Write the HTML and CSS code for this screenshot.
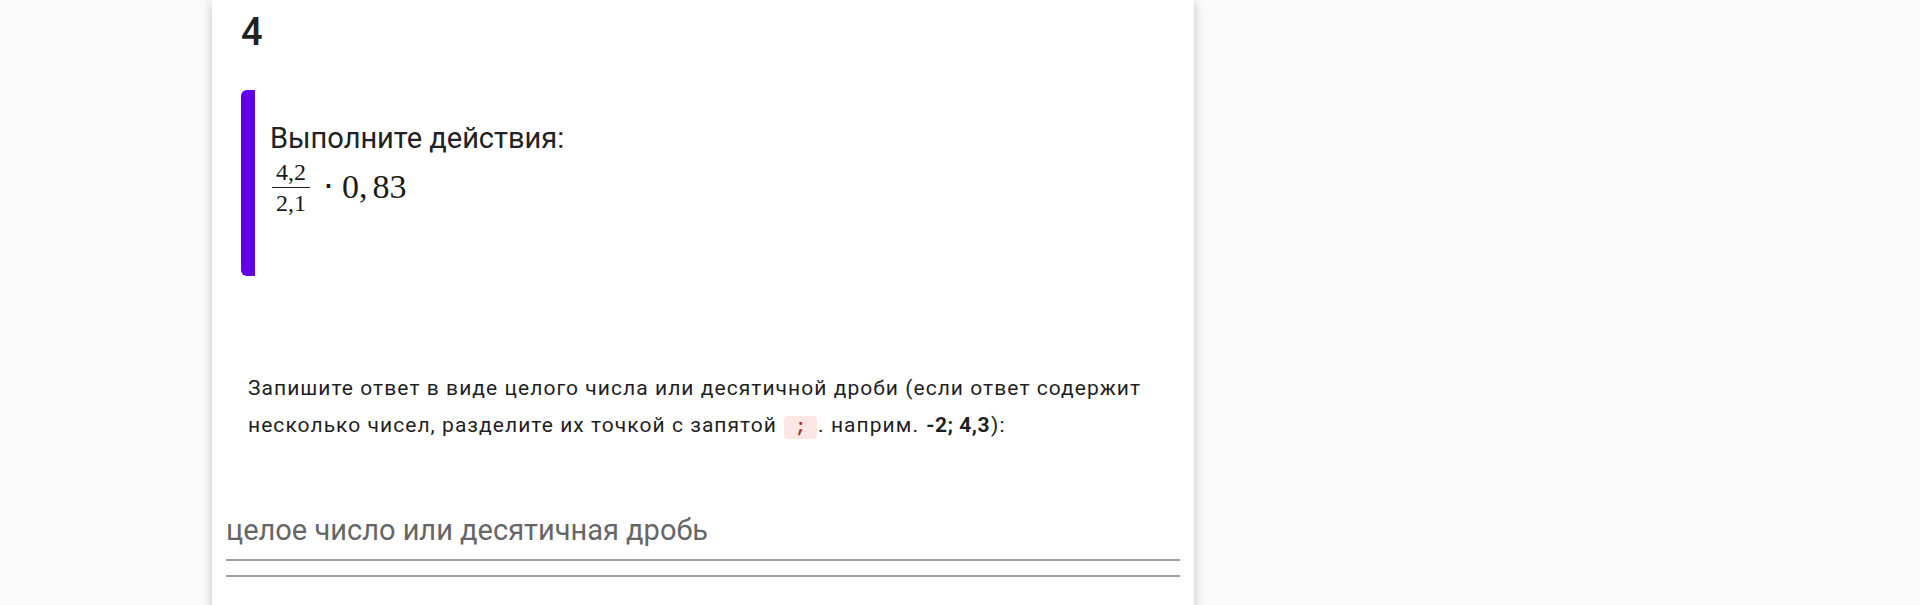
FILE: index.html
```html
<!DOCTYPE html>
<html lang="ru">
<head>
<meta charset="utf-8">
<title>Задание 4</title>
<link rel="stylesheet" href="styles.css">
</head>
<body>
<div class="card">
  <div class="num">4</div>
  <div class="question">
    <div class="qtitle">Выполните действия:</div>
    <div class="math"><span class="frac"><span class="fnum">4,2</span><span class="fden">2,1</span></span><span class="op">⋅</span><span class="mn">0,</span><span class="mn sp">83</span></div>
  </div>
  <p class="hint">Запишите ответ в виде целого числа или десятичной дроби (если ответ содержит несколько чисел, разделите их точкой с запятой <code class="chip">;</code>. наприм. <b>-2; 4,3</b>):</p>
  <div class="field"><input class="answer" type="text" placeholder="целое число или десятичная дробь"></div>
  <div class="line2"></div>
</div>
</body>
</html>
```
FILE: styles.css
```css
html, body {
  margin: 0;
  padding: 0;
  height: 100%;
  overflow: hidden;
  background: #fafafa;
}

.card {
  margin-left: 212px;
  width: 982px;
  height: 700px;
  background: #ffffff;
  box-shadow: 0 2px 10px rgba(0, 0, 0, 0.22);
  padding-top: 13px;
  box-sizing: border-box;
  font-family: Roboto, "Noto Sans", sans-serif;
  color: #212121;
}

.num {
  margin-left: 29px;
  font-size: 38px;
  line-height: 38px;
  font-weight: 500;
}

.question {
  margin: 39px 0 0 29px;
  border-left: 14px solid #6200ea;
  border-radius: 6px 0 0 6px;
  padding: 30px 0 61px 15px;
}

.qtitle {
  font-size: 29px;
  line-height: 36px;
}

.math {
  margin-top: 4px;
  font-family: "Liberation Serif", "Times New Roman", serif;
  font-size: 34px;
  line-height: 40px;
  color: #1a1a1a;
}

.frac {
  display: inline-flex;
  flex-direction: column;
  align-items: center;
  vertical-align: 18px;
  font-size: 24px;
  line-height: 24px;
  margin-left: 2px;
}

.fnum {
  padding: 0 4px 3px;
}

.fden {
  align-self: stretch;
  text-align: center;
  border-top: 1.5px solid #1a1a1a;
  padding: 3px 4px 0;
}

.op {
  margin: 0 8px 0 13px;
}

.sp {
  margin-left: 5px;
}

.hint {
  margin: 94px 14px 0 36px;
  font-size: 21px;
  line-height: 37px;
  letter-spacing: 1.05px;
  color: #1f1f1f;
}

.hint b {
  font-weight: 700;
  letter-spacing: 0.5px;
  margin: 0 1px;
}

.chip {
  display: inline-block;
  font-family: "Liberation Mono", monospace;
  font-weight: 700;
  font-size: 18px;
  line-height: 23px;
  color: #b3261e;
  background: #fde6e4;
  border-radius: 4px;
  padding: 0 11px;
  margin: 0 1px;
  letter-spacing: 0;
}

.field {
  margin: 57px 14px 0 14px;
}

.answer {
  display: block;
  width: 100%;
  height: 60px;
  box-sizing: border-box;
  margin: 0;
  padding: 0;
  border: none;
  border-bottom: 2px solid #a3a3a3;
  background: transparent;
  font-family: Roboto, "Noto Sans", sans-serif;
  font-size: 29px;
  color: #212121;
  outline: none;
}

.answer::placeholder {
  color: #666666;
  opacity: 1;
}

.line2 {
  margin: 14px 14px 0 14px;
  height: 2px;
  background: #a3a3a3;
}
```
